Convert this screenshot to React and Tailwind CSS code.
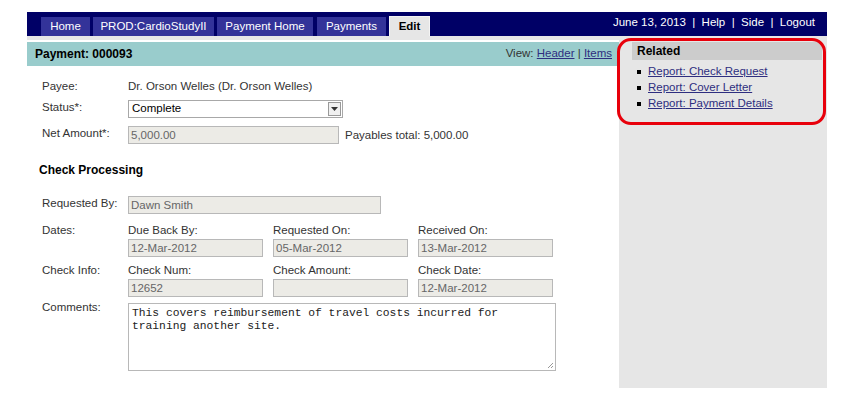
export default function App() {
  const tabs = [["Home", "w-[49px]"], ["PROD:CardioStudyII", "w-[121px]"], ["Payment Home", "w-[96px]"], ["Payments", "w-[69px]"]];
  const inp = "h-[18px] border border-[#b8b8b8] bg-[#ecebe6] text-[#666] text-[11.5px] leading-[16px] px-[2px]";
  return (
    <div className="bg-white w-[847px] h-[394px] overflow-hidden" style={{ fontFamily: '"Liberation Sans", Arial, sans-serif' }}>
      <div className="pt-[12px] pl-[27px] w-[827px]">
        {/* nav */}
        <div className="h-[24px] bg-[#000066] flex justify-between">
          <div className="flex items-end pl-[14px]">
            {tabs.map(([t, w], i) => (
              <div key={t} className={`${w} ${i === 2 ? "mr-[4px]" : "mr-[3px]"} h-[19px] bg-[#333399] text-white text-[11.5px] leading-[19px] text-center`}>{t}</div>
            ))}
            <div className="w-[41px] h-[20px] bg-[#e6e6e6] border-t border-l border-r border-[#f4f4f4] text-black font-bold text-[11.5px] leading-[19px] text-center">Edit</div>
          </div>
          <div className="text-white text-[11.5px] leading-[14px] pt-[3px] pr-[12px]">
            June 13, 2013 &nbsp;|&nbsp; Help &nbsp;|&nbsp; Side &nbsp;|&nbsp; Logout
          </div>
        </div>
        <div className="flex">
          {/* main */}
          <div className="w-[592px]">
            <div className="h-[4px] bg-[#e6e6e6]"></div>
            <div className="h-[2px]"></div>
            <div className="h-[24px] bg-[#99cccc] flex items-center justify-between pl-[8px] pr-[7px] text-[11.5px]">
              <span className="font-bold text-black text-[12px]">Payment: 000093</span>
              <span className="text-[#333]">View: <span className="underline text-[#2e2e80]">Header</span> | <span className="underline text-[#2e2e80]">Items</span></span>
            </div>
            <div className="pl-[15px] text-[11.5px] text-[#333]">
              <div className="flex mt-[13px] h-[16px] items-center">
                <div className="w-[86px]">Payee:</div>
                <div>Dr. Orson Welles (Dr. Orson Welles)</div>
              </div>
              <div className="flex mt-[5px] items-start">
                <div className="w-[86px] leading-[14px]">Status*:</div>
                <div className="w-[215px] h-[18px] border border-[#a8a8a8] bg-white flex items-center justify-between pl-[3px] pr-[1px]">
                  <span className="text-black">Complete</span>
                  <div className="w-[13px] h-[14px] border border-[#999] bg-[#f0f0f0] flex items-center justify-center">
                    <svg width="7" height="4" viewBox="0 0 7 4"><path d="M0 0h7L3.5 4z" fill="#333" /></svg>
                  </div>
                </div>
              </div>
              <div className="flex mt-[8px] items-start">
                <div className="w-[86px] leading-[14px]">Net Amount*:</div>
                <div className={`${inp} w-[211px]`}>5,000.00</div>
                <div className="ml-[6px] leading-[18px]">Payables total: 5,000.00</div>
              </div>
              <div className="mt-[17px] -ml-[3px] font-bold text-black text-[12px]">Check Processing</div>
              <div className="flex mt-[17px] items-start">
                <div className="w-[86px] leading-[14px]">Requested By:</div>
                <div className={`${inp} w-[253px]`}>Dawn Smith</div>
              </div>
              <div className="flex mt-[9px] items-start">
                <div className="w-[86px] leading-[14px]">Dates:</div>
                <div className="flex">
                  {[["Due Back By:", "12-Mar-2012"], ["Requested On:", "05-Mar-2012"], ["Received On:", "13-Mar-2012"]].map(([l, v]) => (
                    <div key={l} className="w-[145px]">
                      <div className="leading-[14px] mb-[2px]">{l}</div>
                      <div className={`${inp} w-[135px]`}>{v}</div>
                    </div>
                  ))}
                </div>
              </div>
              <div className="flex mt-[6px] items-start">
                <div className="w-[86px] leading-[14px]">Check Info:</div>
                <div className="flex">
                  {[["Check Num:", "12652"], ["Check Amount:", ""], ["Check Date:", "12-Mar-2012"]].map(([l, v]) => (
                    <div key={l} className="w-[145px]">
                      <div className="leading-[14px] mb-[2px]">{l}</div>
                      <div className={`${inp} w-[135px]`}>{v}</div>
                    </div>
                  ))}
                </div>
              </div>
              <div className="flex mt-[6px] items-start">
                <div className="w-[86px] leading-[14px] -mt-[3px]">Comments:</div>
                <div className="relative w-[428px] h-[68px] border border-[#b8b8b8] bg-white pl-[3px] pt-[3px] text-[11.3px] leading-[13px] text-[#222]" style={{ fontFamily: '"Liberation Mono", "Courier New", monospace' }}>
                  <div className="w-[380px]">This covers reimbursement of travel costs incurred for training another site.</div>
                  <svg className="absolute right-[1px] bottom-[1px]" width="7" height="7" viewBox="0 0 7 7"><path d="M6 1L1 6M6 4L4 6" stroke="#999" strokeWidth="1" /></svg>
                </div>
              </div>
            </div>
          </div>
          {/* sidebar */}
          <div className="relative w-[208px] h-[352px] bg-[#e6e6e6] pt-[6px] pl-[13px] pr-[5px]">
            <div className="h-[18px] bg-[#cccccc] font-bold text-[12px] text-black leading-[18px] pl-[5px]">Related</div>
            <ul className="mt-[4px] pl-[5px] text-[11.5px]">
              {["Report: Check Request", "Report: Cover Letter", "Report: Payment Details"].map((r) => (
                <li key={r} className="flex items-center h-[16px]">
                  <span className="w-[4px] h-[4px] bg-black mr-[7px]"></span>
                  <span className="underline text-[#2e2e80]">{r}</span>
                </li>
              ))}
            </ul>
            <div className="absolute left-[-2px] top-[2px] w-[209px] h-[87px] border-[3px] border-[#e8000b] rounded-[14px] pointer-events-none"></div>
          </div>
        </div>
      </div>
    </div>
  );
}
